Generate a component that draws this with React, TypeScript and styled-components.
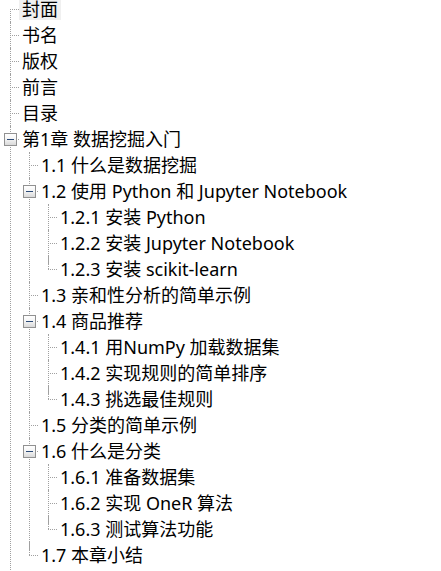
import React from 'react';
import styled, { createGlobalStyle } from 'styled-components';

const ROW_HEIGHT_PX = 26;
const ROW_CENTER_PX = 13;
const INDENT_PX = 19;
const LINE_X_PX = 10;
const LINE_COLOR = '#a0a0a0';
const TOGGLE_SIZE_PX = 13;

interface TreeNode {
  label: string;
  children?: TreeNode[];
  expanded?: boolean;
  selected?: boolean;
}

const leaves = (labels: string[]): TreeNode[] => labels.map((label) => ({ label }));

const TOC: TreeNode[] = [
  { label: '封面', selected: true },
  { label: '书名' },
  { label: '版权' },
  { label: '前言' },
  { label: '目录' },
  {
    label: '第1章 数据挖掘入门',
    expanded: true,
    children: [
      { label: '1.1 什么是数据挖掘' },
      {
        label: '1.2 使用 Python 和 Jupyter Notebook',
        expanded: true,
        children: leaves(['1.2.1 安装 Python', '1.2.2 安装 Jupyter Notebook', '1.2.3 安装 scikit-learn']),
      },
      { label: '1.3 亲和性分析的简单示例' },
      {
        label: '1.4 商品推荐',
        expanded: true,
        children: leaves(['1.4.1 用NumPy 加载数据集', '1.4.2 实现规则的简单排序', '1.4.3 挑选最佳规则']),
      },
      { label: '1.5 分类的简单示例' },
      {
        label: '1.6 什么是分类',
        expanded: true,
        children: leaves(['1.6.1 准备数据集', '1.6.2 实现 OneR 算法', '1.6.3 测试算法功能']),
      },
      { label: '1.7 本章小结' },
    ],
  },
];

const GlobalStyle = createGlobalStyle`
  html, body {
    margin: 0;
    padding: 0;
    background: #ffffff;
  }

  body {
    font-family: "Noto Sans", "Noto Sans CJK SC", sans-serif;
    font-size: 18px;
    color: #000000;
  }
`;

const StyledViewport = styled.div`
  height: 571px;
  overflow: hidden;
  width: 441px;
`;

const StyledList = styled.ul<{ $root?: boolean }>`
  list-style: none;
  margin: ${({ $root }) => ($root ? '-4px 0 0' : '0')};
  padding: 0 0 ${({ $root }) => ($root ? 8 : 0)}px ${({ $root }) => ($root ? 0 : INDENT_PX)}px;
`;

const StyledItem = styled.li<{ $first: boolean; $last: boolean }>`
  position: relative;

  &::before {
    border-left: 1px dotted ${LINE_COLOR};
    content: '';
    left: ${LINE_X_PX}px;
    position: absolute;
    top: ${({ $first }) => ($first ? ROW_CENTER_PX : 0)}px;
    ${({ $last }) => ($last ? `height: ${ROW_CENTER_PX}px;` : 'bottom: -8px;')}
  }
`;

const StyledRow = styled.div`
  align-items: center;
  display: flex;
  height: ${ROW_HEIGHT_PX}px;
  padding-left: ${INDENT_PX}px;
  position: relative;

  &::before {
    border-top: 1px dotted ${LINE_COLOR};
    content: '';
    left: ${LINE_X_PX}px;
    position: absolute;
    top: ${ROW_CENTER_PX}px;
    width: ${INDENT_PX - LINE_X_PX}px;
  }
`;

const StyledLabel = styled.span<{ $selected?: boolean }>`
  background: ${({ $selected }) => ($selected ? '#f0f0f0' : 'transparent')};
  height: 21px;
  line-height: 21px;
  padding: 0 3px;
  white-space: nowrap;
`;

// Expand / collapse box sitting on the crossing of the connector lines
const StyledToggle = styled.span<{ $open: boolean }>`
  background: linear-gradient(#ffffff 0%, #f5f5f5 45%, #d9d9d9 100%);
  border: 1px solid #919191;
  box-sizing: border-box;
  height: ${TOGGLE_SIZE_PX}px;
  left: ${LINE_X_PX - 6}px;
  position: absolute;
  top: ${ROW_CENTER_PX - 6}px;
  width: ${TOGGLE_SIZE_PX}px;
  z-index: 1;

  &::before,
  &::after {
    background: #2b4a78;
    content: '';
    position: absolute;
  }

  &::before {
    height: 1px;
    left: 2px;
    top: 5px;
    width: 7px;
  }

  &::after {
    display: ${({ $open }) => ($open ? 'none' : 'block')};
    height: 7px;
    left: 5px;
    top: 2px;
    width: 1px;
  }
`;

interface BranchProps {
  nodes: TreeNode[];
  root?: boolean;
}

const Branch: React.FC<BranchProps> = ({ nodes, root }) => (
  <StyledList $root={root}>
    {nodes.map((node, index) => (
      <StyledItem
        key={node.label}
        $first={!!root && index === 0}
        $last={!root && index === nodes.length - 1}
      >
        <StyledRow>
          {node.children && <StyledToggle $open={!!node.expanded} />}
          <StyledLabel $selected={node.selected}>{node.label}</StyledLabel>
        </StyledRow>
        {node.children && node.expanded && <Branch nodes={node.children} />}
      </StyledItem>
    ))}
  </StyledList>
);

const App: React.FC = () => (
  <>
    <GlobalStyle />
    <StyledViewport>
      <Branch nodes={TOC} root />
    </StyledViewport>
  </>
);

export default App;
